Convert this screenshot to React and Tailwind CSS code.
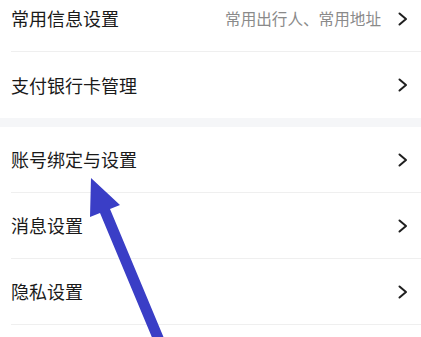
import React from 'react';

function Chevron() {
  return (
    <svg width="10" height="14" viewBox="0 0 10 14" className="shrink-0">
      <polyline points="1.5,1.5 8,7 1.5,12.5" fill="none" stroke="#1f1f1f" strokeWidth="2" strokeLinecap="round" strokeLinejoin="round" />
    </svg>
  );
}

function Row({ title, hint, divider = true }) {
  return (
    <div className="bg-white pl-[11px]">
      <div className={`h-[66px] flex items-center pr-[13px] ${divider ? 'border-b border-[#efefef]' : ''}`}>
        <span className="flex-1 text-[18px] text-[#1a1a1a]">{title}</span>
        {hint && <span className="text-[15.6px] text-[#8a8a8a] mr-[17px]">{hint}</span>}
        <Chevron />
      </div>
    </div>
  );
}

export default function App() {
  return (
    <div
      className="relative w-[421px] h-[337px] overflow-hidden bg-white"
      style={{ fontFamily: '"Noto Sans CJK SC", "Noto Sans", sans-serif' }}
    >
      <div className="-mt-[14px]">
        <Row title="常用信息设置" hint="常用出行人、常用地址" />
        <Row title="支付银行卡管理" divider={false} />
        <div className="h-[9px] bg-[#f5f6f8]" />
        <Row title="账号绑定与设置" />
        <Row title="消息设置" />
        <Row title="隐私设置" />
        <Row title="" />
      </div>

      {/* annotation arrow */}
      <svg className="absolute inset-0 pointer-events-none" width="421" height="337" viewBox="0 0 421 337">
        <polygon
          points="91,178 120,205 110,209 166,343 156,347 100,213 90,217"
          fill="#3a3ec6"
        />
      </svg>
    </div>
  );
}
